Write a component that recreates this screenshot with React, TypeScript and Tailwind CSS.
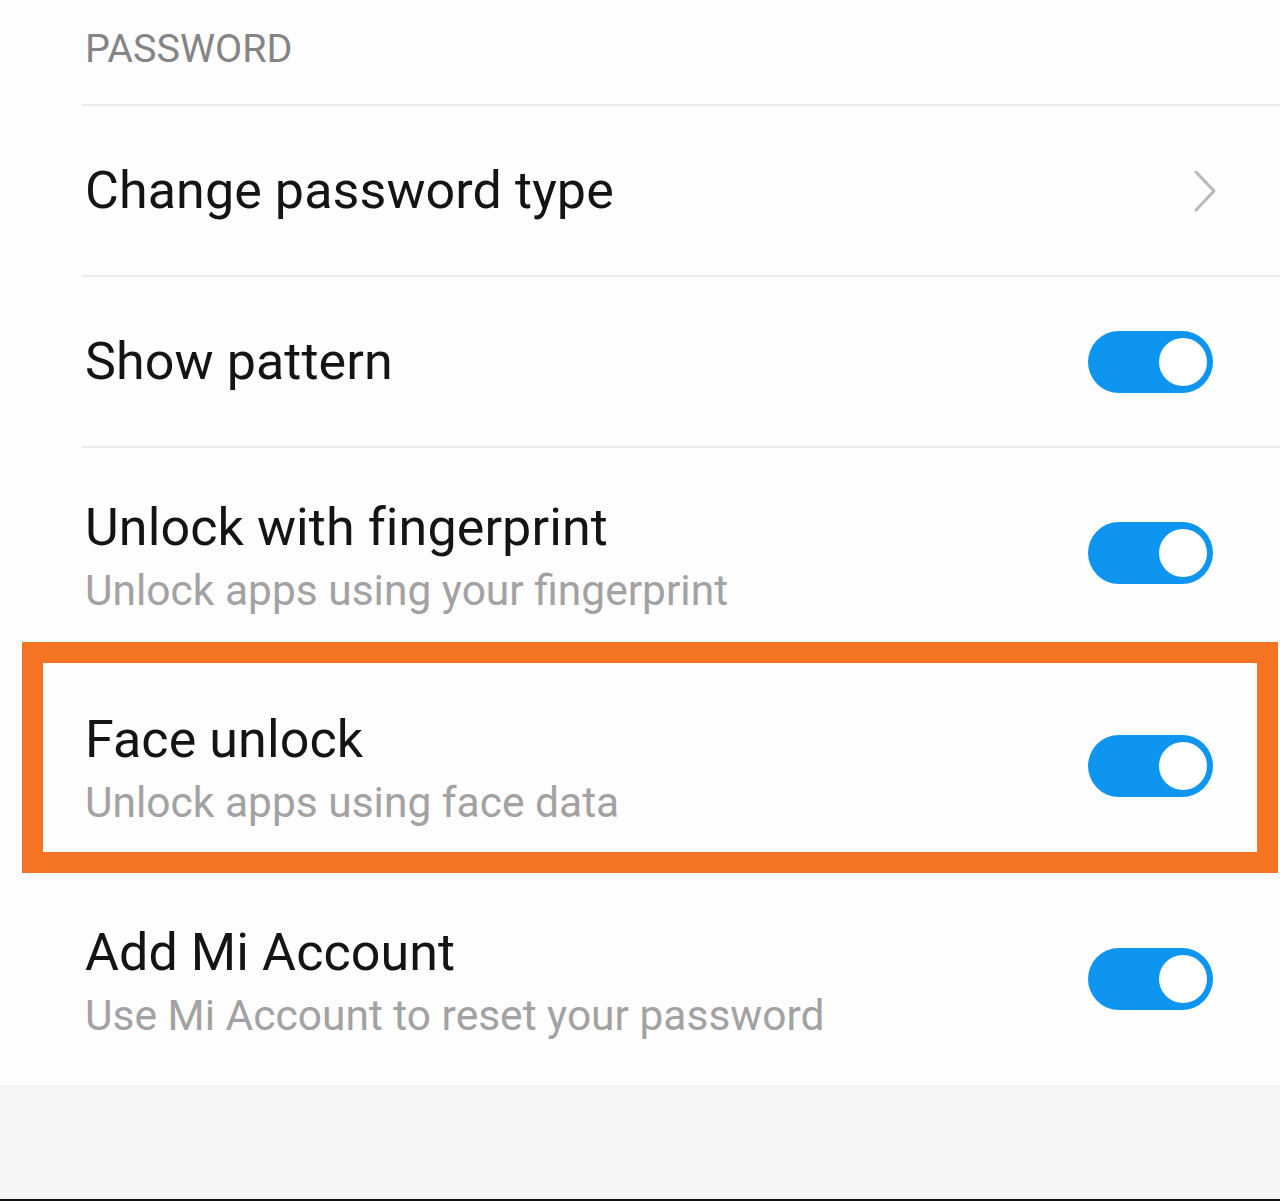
import React from "react";

const font = "font-['Roboto','Liberation_Sans',sans-serif]";

const Toggle = ({ className = "" }: { className?: string }) => {
  return (
    <div className={`flex items-center justify-end w-[125px] h-[62px] pr-[6px] rounded-full bg-[#0d95f0] ${className}`}>
      <div className="w-[48px] h-[48px] rounded-full bg-white" />
    </div>
  );
};

const Divider = () => <div className="ml-[82px] h-[2px] bg-[#ececec]" />;

const Chevron = () => {
  return (
    <svg width="24" height="44" viewBox="0 0 24 44" fill="none" xmlns="http://www.w3.org/2000/svg">
      <path d="M3 3L21 22L3 41" stroke="#b8b8b8" strokeWidth="3" strokeLinecap="round" strokeLinejoin="round" />
    </svg>
  );
};

const Title = ({ children }: { children: React.ReactNode }) => (
  <div className="text-[52px] leading-[64px] text-[#141414] tracking-[0.1px]">{children}</div>
);

const Subtitle = ({ children }: { children: React.ReactNode }) => (
  <div className="mt-[3px] text-[42.5px] leading-[56px] text-[#a2a2a2]">{children}</div>
);

const SettingsList = () => {
  return (
    <div className={`flex flex-col w-[1280px] bg-[#fdfdfd] ${font}`}>
      <div className="flex items-center h-[104px] pl-[85px] pb-[6px] text-[39.5px] text-[#858585]">
        PASSWORD
      </div>
      <Divider />

      <div className="flex items-center justify-between h-[169px] pl-[85px] pr-[63px]">
        <Title>Change password type</Title>
        <Chevron />
      </div>
      <Divider />

      <div className="flex items-center justify-between h-[169px] pl-[85px] pr-[67px]">
        <Title>Show pattern</Title>
        <Toggle />
      </div>
      <Divider />

      <div className="flex items-start justify-between h-[194px] pl-[85px] pr-[67px] pt-[48px]">
        <div>
          <Title>Unlock with fingerprint</Title>
          <Subtitle>Unlock apps using your fingerprint</Subtitle>
        </div>
        <Toggle className="mt-[26px]" />
      </div>

      <div className="flex items-start justify-between h-[231px] ml-[22px] mr-[2px] pl-[42px] pr-[44px] pt-[45px] border-[21px] border-[#f47424]">
        <div>
          <Title>Face unlock</Title>
          <Subtitle>Unlock apps using face data</Subtitle>
        </div>
        <Toggle className="mt-[27px]" />
      </div>

      <div className="flex items-start justify-between h-[213px] pl-[85px] pr-[67px] pt-[48px]">
        <div>
          <Title>Add Mi Account</Title>
          <Subtitle>Use Mi Account to reset your password</Subtitle>
        </div>
        <Toggle className="mt-[27px]" />
      </div>

      <div className="h-[113px] bg-[#f6f6f6] border-t border-[#efefef]" />
      <div className="h-[2px] bg-[#111111]" />
    </div>
  );
};

export default SettingsList;
